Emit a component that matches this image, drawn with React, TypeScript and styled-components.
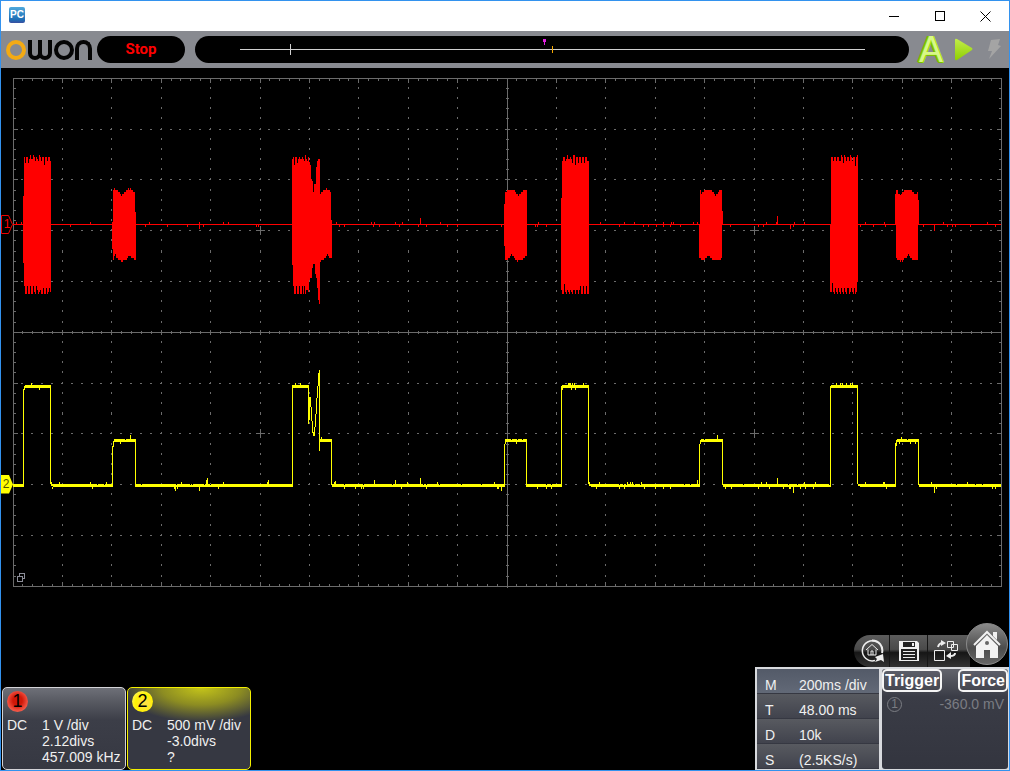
import React from 'react';
import styled, { createGlobalStyle } from 'styled-components';

const GlobalStyle = createGlobalStyle`
  * { box-sizing: border-box; }
  body { margin: 0; background: #000; font-family: "Liberation Sans", Arial, sans-serif; }
  button { font-family: inherit; padding: 0; border: 0; background: none; color: inherit; }
  svg { display: block; }
`;

const Window = styled.div`
  display: flex;
  flex-direction: column;
  min-height: 100vh;
  border: 1px solid #3392ee;
  background: #000;
`;

const TitleBar = styled.header`
  display: flex;
  align-items: center;
  justify-content: space-between;
  height: 30px;
  padding-left: 8px;
  background: #fff;
`;

const AppBadge = styled.span`
  display: flex;
  align-items: center;
  justify-content: center;
  width: 16px;
  height: 16px;
  margin-bottom: 2px;
  border-radius: 2px;
  background: linear-gradient(#4fa9dc, #1d6db5 80%, #3a4fa0);
  color: #fff;
  font-size: 10px;
  font-weight: 700;
  line-height: 16px;
`;

const WindowButtons = styled.div`
  display: flex;
`;

const WindowButton = styled.button`
  display: flex;
  align-items: center;
  justify-content: center;
  width: 46px;
  height: 29px;
`;

const Toolbar = styled.div`
  display: flex;
  align-items: center;
  height: 37px;
  padding: 0 6px 0 5px;
  background: #888a90;
`;

const Logo = styled.div`
  display: flex;
  align-items: center;
  width: 88px;
`;

const Ring = styled.span<{ $tone: string }>`
  width: 20px;
  height: 20px;
  border: 4px solid ${p => p.$tone};
  border-radius: 50%;
`;

const Cup = styled.span`
  width: 14px;
  height: 20px;
  border: 4px solid #050505;
  border-top: 0;
  border-radius: 0 0 8px 8px;
  & + & { margin-left: -4px; }
`;

const CupPair = styled.span`
  display: flex;
  margin: 0 2px;
`;

const Arch = styled.span`
  width: 17px;
  height: 20px;
  margin-left: 1px;
  border: 4px solid #050505;
  border-bottom: 0;
  border-radius: 9px 9px 0 0;
`;

const RunState = styled.div`
  width: 88px;
  height: 27px;
  margin: 0 10px 0 3px;
  border-radius: 14px;
  background: #000;
  color: #f00;
  font: 700 15px/27px Roboto, sans-serif;
  text-align: center;
`;

const MemoryBar = styled.div`
  flex: 1;
  height: 27px;
  border-radius: 14px;
  background: #000;
  overflow: hidden;
`;

const ToolIcons = styled.div`
  display: flex;
  align-items: center;
  gap: 11px;
  margin-left: 9px;
`;

const AutoButton = styled.button`
  width: 26px;
  height: 30px;
  color: #d8f888;
  font-size: 36px;
  font-weight: 400;
  line-height: 28px;
  text-align: center;
  text-shadow: 1px 0 #a4e010, -1px 0 #8fd400, -2px 0 #79bd00, -1px 1px #79bd00, 1px 1px #8fd400;
`;

const IconButton = styled.button`
  display: block;
`;

const Scope = styled.main`
  svg { width: 100%; height: auto; }
`;

const Footer = styled.footer`
  display: flex;
  justify-content: space-between;
  align-items: flex-end;
  margin-top: auto;
`;

const Channels = styled.div`
  display: flex;
  gap: 1px;
  padding-left: 1px;
`;

const ChannelCard = styled.section<{ $edge: string; $fill: string }>`
  width: 124px;
  height: 83px;
  padding: 3px 0 0 4px;
  border: 1px solid ${p => p.$edge};
  border-radius: 5px;
  background: ${p => p.$fill};
  color: #f0f0f0;
  font-size: 14px;
  line-height: 16px;
`;

const ChannelBadge = styled.div<{ $fill: string }>`
  width: 21px;
  height: 21px;
  border-radius: 50%;
  background: ${p => p.$fill};
  color: #000;
  font-size: 18px;
  line-height: 21px;
  text-align: center;
`;

const ChannelBody = styled.div`
  display: flex;
  margin-top: 5px;
`;

const Coupling = styled.div`
  width: 35px;
  flex: none;
`;

const Readings = styled.div`
  white-space: nowrap;
`;

const RightDock = styled.div`
  display: flex;
  flex-direction: column;
  align-items: flex-end;
`;

const QuickBar = styled.nav`
  display: flex;
  align-items: flex-end;
  padding-right: 1px;
`;

const QuickButton = styled.button<{ $width: number; $first?: boolean; $tucked?: boolean }>`
  display: flex;
  align-items: center;
  justify-content: center;
  width: ${p => p.$width}px;
  height: 32px;
  padding-right: ${p => (p.$tucked ? 6 : 0)}px;
  border-left: ${p => (p.$first ? 0 : '1px solid #161616')};
  border-radius: ${p => (p.$first ? '16px 0 0 16px' : 0)};
  background: linear-gradient(#5c5c5c, #4a4a4a 45%, #161616 55%, #333 100%);
`;

const HomeButton = styled.button`
  display: flex;
  align-items: center;
  justify-content: center;
  width: 42px;
  height: 42px;
  margin: 0 0 2px -4px;
  border: 1px solid #8a8a8a;
  border-radius: 50%;
  background: linear-gradient(#8a8a8a, #4c4c4c 60%, #666);
`;

const Panels = styled.div`
  display: flex;
  gap: 3px;
  padding: 2px 1px 1px 2px;
  background: #d8dade;
`;

const TimeTable = styled.table`
  width: 122px;
  border-spacing: 0;
  background: #4a4c55;
  color: #f0f0f0;
  font-size: 14px;
`;

const TimeRow = styled.tr<{ $active?: boolean }>`
  height: 25px;
  background: ${p => (p.$active
    ? 'linear-gradient(#535a68, #626977 24px, #363842 24px)'
    : 'linear-gradient(#585a60, #41434d 24px, #363842 24px)')};
  th, td { padding: 6px 0 0; font-weight: 400; line-height: 16px; text-align: left; white-space: nowrap; }
  th { width: 42px; padding-left: 8px; }
`;

const TriggerPanel = styled.section`
  width: 126px;
  height: 100px;
  border-radius: 3px;
  background: linear-gradient(#62646c, #3a3c46 28%, #33353f);
`;

const TriggerButtons = styled.div`
  display: flex;
  justify-content: space-between;
`;

const TriggerButton = styled.button`
  height: 23px;
  padding: 0 1px;
  border: 2px solid #f4f4f4;
  border-radius: 5px;
  background: linear-gradient(#5c5e68, #454750);
  color: #fff;
  font-size: 16px;
  font-weight: 700;
  line-height: 18px;
`;

const TriggerInfo = styled.div`
  display: flex;
  align-items: center;
  justify-content: space-between;
  padding: 4px 4px 0 5px;
  color: #7b7d83;
  font-size: 14px;
  line-height: 16px;
`;

const SourceMark = styled.span`
  width: 15px;
  height: 15px;
  border: 1px solid #7b7d83;
  border-radius: 50%;
  font-size: 12px;
  line-height: 13px;
  text-align: center;
`;

/* ---- Graticule ---- */

const LEFT = 13;
const TOP = 78;
const RIGHT = 1001;
const BOTTOM = 586;
const MID_X = 507;
const MID_Y = 332;
const gx = (i: number) => Math.floor(LEFT + (i * (RIGHT - LEFT)) / 100);
const gy = (i: number) => Math.round(TOP - 0.2 + (i * (BOTTOM - TOP)) / 50);

const box = (x: number, y: number, w: number, h: number) => `M${x} ${y}h${w}v${h}h${-w}z`;

function graticulePath() {
  const d: string[] = [
    box(LEFT, TOP, RIGHT - LEFT + 1, 1),
    box(LEFT, BOTTOM, RIGHT - LEFT + 1, 1),
    box(LEFT, TOP, 1, BOTTOM - TOP),
    box(RIGHT, TOP, 1, BOTTOM - TOP),
    box(LEFT, MID_Y, RIGHT - LEFT, 1),
    box(MID_X, TOP, 1, BOTTOM - TOP + 2),
  ];
  for (let i = 1; i < 100; i++) {
    const x = gx(i);
    const major = i % 5 === 0;
    d.push(box(x, TOP, 1, major ? 5 : 3));
    d.push(box(x, BOTTOM - (major ? 4 : 2), 1, major ? 4 : 2));
    d.push(box(x, MID_Y - (major ? 2 : 1), 1, major ? 5 : 3));
    for (let j = 5; j < 50; j += 5) if (j !== 25) d.push(box(x - 1, gy(j), 2, 1));
  }
  for (let j = 1; j < 50; j++) {
    const y = gy(j);
    const major = j % 5 === 0;
    d.push(box(LEFT, y, major ? 5 : 3, 1));
    d.push(box(RIGHT - (major ? 4 : 2), y, major ? 4 : 2, 1));
    d.push(box(MID_X - (major ? 2 : 1), y, major ? 5 : 3, 1));
    for (let i = 5; i < 100; i += 5) if (i !== 50) d.push(box(gx(i), y - 1, 1, j === 17 || j === 33 ? 3 : 2));
  }
  for (const x of [260, 754]) for (const y of [230, 433]) d.push(box(x - 4, y, 9, 1), box(x, y - 4, 1, 9));
  return d.join('');
}

/* ---- Channel 1: each burst is an upper and a lower stepped edge ---- */

type Step = [number, number];
interface Burst { end: number; top: Step[]; bottom: Step[] }

const bursts: Burst[] = [
  {
    end: 51,
    top: [[23, 196], [24, 157], [25, 163], [26, 157], [28, 163], [29, 159], [30, 155], [31, 159], [33, 155], [34, 157], [35, 161], [36, 157], [37, 159], [38, 161], [39, 155], [40, 157], [41, 161], [42, 157], [44, 165], [45, 157], [47, 161], [48, 157], [50, 161]],
    bottom: [[23, 263], [24, 286], [25, 294], [27, 286], [28, 294], [30, 286], [31, 294], [33, 286], [34, 292], [35, 294], [36, 286], [37, 290], [38, 294], [39, 292], [40, 290], [41, 294], [43, 288], [44, 294], [46, 288], [47, 294], [48, 292], [49, 288], [50, 292]],
  },
  {
    end: 136,
    top: [[112, 222], [113, 190], [114, 188], [115, 190], [118, 192], [120, 194], [121, 196], [122, 194], [124, 192], [126, 190], [128, 188], [129, 190], [130, 188], [131, 190], [133, 192], [135, 212]],
    bottom: [[112, 249], [113, 260], [114, 256], [115, 254], [116, 258], [118, 260], [121, 262], [123, 260], [127, 258], [128, 256], [131, 258], [134, 260]],
  },
  {
    end: 332,
    top: [[292, 159], [293, 157], [294, 165], [295, 157], [297, 163], [298, 159], [299, 157], [300, 159], [302, 157], [303, 159], [304, 161], [305, 155], [306, 159], [307, 161], [308, 157], [309, 162], [310, 165], [311, 179], [312, 181], [313, 192], [314, 184], [316, 167], [317, 161], [318, 159], [320, 194], [321, 192], [323, 190], [326, 188], [327, 190], [330, 192], [331, 220]],
    bottom: [[292, 265], [293, 286], [294, 294], [296, 286], [297, 294], [299, 286], [300, 294], [302, 286], [303, 294], [304, 286], [305, 294], [306, 290], [308, 292], [309, 280], [310, 278], [312, 268], [313, 264], [315, 274], [316, 278], [317, 288], [318, 300], [319, 304], [320, 262], [321, 260], [324, 258], [326, 256], [327, 254], [328, 256], [329, 258]],
  },
  {
    end: 527,
    top: [[504, 204], [505, 192], [507, 190], [515, 192], [516, 194], [518, 196], [519, 194], [521, 192], [523, 190]],
    bottom: [[504, 246], [505, 260], [508, 258], [510, 256], [511, 254], [512, 256], [514, 258], [515, 260], [517, 262], [518, 260], [523, 258], [525, 256]],
  },
  {
    end: 589,
    top: [[561, 198], [562, 161], [563, 157], [565, 161], [566, 159], [567, 155], [568, 159], [570, 157], [571, 159], [572, 163], [573, 155], [575, 165], [576, 157], [578, 163], [579, 157], [581, 163], [582, 157], [584, 163], [585, 157], [587, 161]],
    bottom: [[561, 290], [562, 294], [564, 284], [565, 292], [566, 294], [567, 290], [568, 292], [569, 294], [570, 290], [571, 292], [572, 294], [573, 290], [575, 294], [576, 290], [578, 294], [579, 290], [580, 286], [581, 294], [583, 286], [584, 294], [586, 286], [587, 294]],
  },
  {
    end: 723,
    top: [[699, 224], [700, 190], [701, 194], [702, 192], [704, 190], [712, 192], [714, 194], [715, 196], [716, 194], [718, 192], [719, 190], [722, 211]],
    bottom: [[699, 258], [701, 260], [705, 258], [707, 256], [710, 258], [712, 260], [721, 258], [722, 225]],
  },
  {
    end: 858,
    top: [[830, 224], [831, 157], [833, 161], [834, 157], [836, 161], [837, 157], [839, 161], [841, 155], [842, 157], [843, 163], [844, 155], [845, 157], [846, 161], [847, 157], [849, 161], [850, 155], [851, 157], [852, 161], [853, 157], [855, 166], [856, 157], [857, 155]],
    bottom: [[830, 292], [832, 283], [833, 292], [834, 294], [835, 288], [836, 292], [837, 294], [838, 288], [839, 292], [840, 294], [841, 288], [842, 292], [843, 294], [844, 288], [845, 292], [846, 294], [847, 288], [849, 294], [850, 292], [851, 288], [852, 292], [853, 294], [854, 288], [855, 294], [856, 292], [857, 282]],
  },
  {
    end: 919,
    top: [[895, 194], [896, 190], [898, 194], [900, 195], [901, 194], [902, 192], [904, 190], [912, 192], [914, 194], [917, 192], [918, 200]],
    bottom: [[895, 225], [896, 258], [897, 260], [900, 262], [901, 260], [902, 262], [903, 260], [904, 258], [907, 256], [908, 254], [909, 256], [910, 258], [912, 260], [918, 225]],
  },
];

function edgePoints(steps: Step[], end: number) {
  const pts: string[] = [];
  steps.forEach(([x, y], i) => {
    const next = i + 1 < steps.length ? steps[i + 1][0] : end;
    pts.push(`${x},${y}`, `${next},${y}`);
  });
  return pts;
}

const burstPoints = (b: Burst) =>
  [...edgePoints(b.top, b.end), ...edgePoints(b.bottom, b.end).reverse()].join(' ');

/* x, then signed height of the spike (negative goes up) */
const redNoise: Step[] = [
  [16, -2], [21, -2], [70, 2], [90, -2], [145, 2], [149, -2], [167, 2], [187, 2], [199, 4], [199, -2], [203, 2], [223, -2], [228, -2], [256, 2], [258, 2],
  [336, -2], [339, 2], [344, 2], [371, -2], [373, 2], [374, -2], [379, 2], [395, -2], [399, 2], [402, -2], [418, 2], [420, -6], [426, 2], [440, -2], [447, 2], [457, 2], [501, 2],
  [535, 2], [537, 2], [538, -2], [546, 2], [600, -2], [619, 2], [624, -2], [634, -2], [643, 2], [648, 2], [656, 2], [663, -2], [663, 2], [670, 2], [671, -2], [673, -2], [680, 2], [693, -2], [697, -2],
  [730, 2], [758, 2], [763, 2], [766, -2], [777, -8], [776, -2], [790, 4], [793, 2], [794, -2], [804, -2], [860, 2], [865, -2], [873, 2], [884, -2], [885, 2],
  [923, 2], [934, 6], [943, -2], [947, 2], [952, 2], [955, 2], [970, 2], [987, -2], [995, 2],
];

const spikes = (list: Step[], y: number, thick: number) =>
  list.map(([x, h]) => (h < 0 ? box(x, y + h, 1, -h) : box(x, y + thick, 1, h))).join('');

/* ---- Channel 2 ---- */

const yellowNoise: Step[] = [
  [52, 2], [59, -2], [90, -2], [92, 2], [106, -2], [174, 2], [175, 4], [177, 2], [181, -2], [199, 4], [206, -4], [207, -6], [218, 2], [223, -2], [267, -2], [268, -4],
  [334, -2], [335, -3], [344, 2], [355, 2], [361, 2], [363, 2], [374, -4], [395, -4], [401, 2], [407, -2], [420, -6], [426, 2], [437, -2], [494, -2], [497, 2], [498, 2], [501, 4],
  [537, 2], [546, 2], [551, 2], [596, 2], [599, -2], [619, 2], [624, 2], [627, -2], [630, -2], [632, -2], [641, -2], [644, 2], [655, 2], [663, 2], [670, 2], [697, -4],
  [725, 2], [731, 2], [758, 2], [761, -2], [766, -2], [769, 2], [777, -6], [783, 2], [789, 2], [790, 2], [793, 6], [800, 2], [804, -2], [805, 2], [813, 2], [815, -2],
  [865, -2], [883, -2], [884, -2], [886, 2], [931, -2], [934, 6], [936, 2], [967, -2], [992, 2], [995, 2],
];

const yellowGaps = [97, 104, 141, 176, 190, 192, 204, 210, 344, 363, 392, 423, 426, 439, 461, 481, 546, 551, 619, 623, 626, 634, 640, 684, 690, 743, 788, 797, 829, 956, 975, 982];

function yellowPath() {
  const d: string[] = [];
  const low: Step[] = [[13, 24], [53, 113], [135, 293], [332, 505], [526, 562], [591, 700], [723, 831], [860, 896], [919, 1001]];
  low.forEach(([a, b]) => d.push(box(a, 484, b - a, 3)));
  const high: Step[] = [[25, 50], [293, 309], [562, 589], [831, 858]];
  high.forEach(([a, b]) => d.push(box(a, 385, b - a, 3)));
  const mid: Step[] = [[114, 136], [320, 332], [506, 527], [701, 723], [897, 919]];
  mid.forEach(([a, b]) => d.push(box(a, 439, b - a, 3)));
  // x, top and bottom of every vertical run
  const runs: [number, number, number][] = [
    [23, 389, 487], [24, 386, 390], [50, 385, 484], [51, 482, 486], [52, 484, 486],
    [112, 446, 487], [113, 441, 447], [135, 440, 487],
    [292, 385, 487], [308, 385, 424], [309, 397, 420], [310, 397, 407], [311, 407, 421], [312, 421, 433], [313, 432, 436], [314, 427, 436], [315, 414, 427], [316, 398, 414], [317, 386, 398], [318, 373, 386], [319, 370, 451], [331, 440, 485],
    [504, 444, 487], [505, 439, 444], [526, 439, 487],
    [561, 386, 487], [588, 385, 484], [589, 482, 486], [590, 484, 486],
    [699, 444, 487], [700, 440, 444], [722, 439, 485],
    [830, 386, 487], [857, 385, 484], [858, 484, 486], [859, 484, 486],
    [895, 443, 487], [896, 440, 446], [918, 439, 485],
    [31, 383, 385], [39, 388, 390], [120, 442, 444], [130, 435, 439], [295, 383, 385], [300, 383, 385], [321, 437, 439],
    [516, 442, 444], [562, 388, 390], [568, 383, 385], [569, 383, 385], [570, 383, 385], [572, 383, 385], [574, 383, 385], [583, 383, 385], [571, 388, 390], [575, 388, 390],
    [717, 435, 439], [836, 383, 385], [840, 383, 385], [842, 383, 385], [846, 383, 385], [850, 383, 385], [852, 383, 385], [901, 437, 439], [899, 442, 444], [910, 442, 444], [915, 442, 444],
  ];
  runs.forEach(([x, a, b]) => d.push(box(x, a, 1, b - a)));
  d.push(spikes(yellowNoise, 484, 3));
  return d.join('');
}

const Oscillogram = () => (
  <svg viewBox="1 68 1008 530" shapeRendering="crispEdges" role="img" aria-label="Channel 1 and channel 2 waveforms">
    <path d={graticulePath()} fill="#6b6b6b" />
    <g fill="#f00">
      <path d={box(LEFT, 224, RIGHT - LEFT, 1) + spikes(redNoise, 224, 1)} />
      {bursts.map(b => <polygon key={b.end} points={burstPoints(b)} />)}
    </g>
    <path d={yellowPath()} fill="#ff0" />
    <path d={yellowGaps.map(x => box(x, 484, 1, 1)).join('') + [125, 511, 517, 522, 704, 907].map(x => box(x, 439, 1, 1)).join('')} fill="#000" />
    <g shapeRendering="auto" fontFamily="Liberation Sans" fontSize="12" textAnchor="middle">
      <path d="M1.5 215.500h7l4 9l-4 9h-7z" fill="none" stroke="#e00" />
      <text x="7" y="228" fill="#f00">1</text>
      <path d="M1 475h8l4 9.500l-4 9h-8z" fill="#ff0" />
      <text x="6" y="488" fill="#555500">2</text>
    </g>
    <g fill="#000" stroke="#8b8d98">
      <rect x="19.500" y="573.500" width="5" height="5" />
      <rect x="17.500" y="576.500" width="5" height="5" />
    </g>
  </svg>
);

const MemoryMap = () => (
  <svg width="100%" height="27" viewBox="195 36 714 27" preserveAspectRatio="none" shapeRendering="crispEdges">
    <rect x="240" y="49" width="625" height="1" fill="#d0d0d0" />
    <rect x="290" y="44" width="1" height="11" fill="#d0d0d0" />
    <path d="M543 39h3v3h-1v3h-1v-3h-1z" fill="#e020e0" />
    <rect x="552" y="46" width="1" height="7" fill="#f5a800" />
  </svg>
);

const timeRows = [
  ['M', '200ms /div'],
  ['T', '48.00 ms'],
  ['D', '10k'],
  ['S', '(2.5KS/s)'],
];

export default function App() {
  return (
    <>
      <GlobalStyle />
      <Window>
        <TitleBar>
          <AppBadge>PC</AppBadge>
          <WindowButtons>
            <WindowButton aria-label="Minimize">
              <svg width="10" height="11" shapeRendering="crispEdges"><path d="M0 5.500h10" stroke="#000" /></svg>
            </WindowButton>
            <WindowButton aria-label="Maximize">
              <svg width="11" height="11" shapeRendering="crispEdges"><path d="M.5.500h9v9h-9z" fill="none" stroke="#000" /></svg>
            </WindowButton>
            <WindowButton aria-label="Close">
              <svg width="12" height="11"><path d="M.5.500l10 10M10.500.500l-10 10" stroke="#000" /></svg>
            </WindowButton>
          </WindowButtons>
        </TitleBar>

        <Toolbar>
          <Logo role="img" aria-label="owon">
            <Ring $tone="#f3aa14" />
            <CupPair><Cup /><Cup /></CupPair>
            <Ring $tone="#050505" />
            <Arch />
          </Logo>
          <RunState>Stop</RunState>
          <MemoryBar><MemoryMap /></MemoryBar>
          <ToolIcons>
            <AutoButton aria-label="Autoset">A</AutoButton>
            <IconButton aria-label="Run">
              <svg width="19" height="23" viewBox="0 0 19 23">
                <defs>
                  <linearGradient id="run" x1="0" y1="0" x2="0" y2="1">
                    <stop offset="0" stopColor="#c2ec4c" />
                    <stop offset="1" stopColor="#8fd000" />
                  </linearGradient>
                </defs>
                <path d="M0 2q0-2 2-1l15 9q1 1 0 2L2 22q-2 1-2-1z" fill="url(#run)" />
              </svg>
            </IconButton>
            <IconButton aria-label="Single">
              <svg width="18" height="21" viewBox="0 0 18 21">
                <path d="M6 1l9-1-2 6 3 1L4 20l3-8H3z" fill="#a4a4a4" />
              </svg>
            </IconButton>
          </ToolIcons>
        </Toolbar>

        <Scope><Oscillogram /></Scope>

        <Footer>
          <Channels>
            <ChannelCard $edge="#d4d4d8" $fill="linear-gradient(#6e7078, #5a5c64 12px, #3c3e48 32px, #363842)">
              <ChannelBadge $fill="radial-gradient(circle at 50% 45%, #d01808 30%, #ee4a3a 60%, #f08070)">1</ChannelBadge>
              <ChannelBody>
                <Coupling>DC</Coupling>
                <Readings>
                  <div>1 V /div</div>
                  <div>2.12divs</div>
                  <div>457.009 kHz</div>
                </Readings>
              </ChannelBody>
            </ChannelCard>
            <ChannelCard $edge="#f4f000" $fill="radial-gradient(ellipse 80px 34px at 60% 0, #c4c41a, #8c8c22 50%, #363842)">
              <ChannelBadge $fill="radial-gradient(circle at 60% 60%, #ffe040 15%, #fff200 50%, #fff68a)">2</ChannelBadge>
              <ChannelBody>
                <Coupling>DC</Coupling>
                <Readings>
                  <div>500 mV /div</div>
                  <div>-3.0divs</div>
                  <div>?</div>
                </Readings>
              </ChannelBody>
            </ChannelCard>
          </Channels>

          <RightDock>
            <QuickBar>
              <QuickButton $width={35} $first aria-label="Default view">
                <svg width="24" height="24" viewBox="0 0 24 24" fill="none" stroke="#eee">
                  <path d="M17 3A10 10 0 1 0 15 21.500" strokeWidth="1.500" />
                  <path d="M12 1.500A10 10 0 0 1 22 14" strokeWidth="2" />
                  <path d="M15 18l8-3 1 8-3-2-6 2 2-3z" fill="#eee" stroke="none" />
                  <path d="M6 11l6-5.500 6 5.500M8 10.500V16h8v-5.500M11 16v-4h2v4" />
                </svg>
              </QuickButton>
              <QuickButton $width={38} aria-label="Save">
                <svg width="20" height="20" viewBox="0 0 20 20">
                  <path d="M0 0h18l2 2v18H0z" fill="#f0f0f0" />
                  <path d="M4 1h12v5H4z" fill="#222" />
                  <path d="M13 2h2v3h-2z" fill="#f0f0f0" />
                  <path d="M2 8h16v11H2z" fill="#222" />
                  <path d="M4 10.500h12M4 13.500h12M4 16.500h12" stroke="#eee" />
                </svg>
              </QuickButton>
              <QuickButton $width={43} $tucked aria-label="Switch window">
                <svg width="24" height="22" viewBox="0 0 24 22" fill="none" stroke="#eee">
                  <path d="M.5 10.500h10v10H.5z" />
                  <path d="M13.500 1.500h6v6h-6zM17.500 4.500h6v6h-6z" />
                  <path d="M4 7q1-4 5-4" strokeWidth="2" />
                  <path d="M7 0l5 3-5 3zM17 12l-5 4 5 3z" fill="#eee" stroke="none" />
                  <path d="M21 13q0 3-5 3" strokeWidth="2" />
                </svg>
              </QuickButton>
              <HomeButton aria-label="Home">
                <svg width="28" height="29" viewBox="0 0 28 29">
                  <path d="M1 15L14 2l13 13" fill="none" stroke="#f2f2f2" strokeWidth="2" />
                  <path d="M20 2h4v8l-4-4z" fill="#f2f2f2" />
                  <path d="M3 16L14 5l11 11v12h-8v-8h-6v8H3z" fill="#f2f2f2" />
                  <circle cx="14" cy="13" r="2" fill="#666" />
                </svg>
              </HomeButton>
            </QuickBar>
            <Panels>
              <TimeTable>
                <tbody>
                  {timeRows.map(([key, value], i) => (
                    <TimeRow key={key} $active={i === 0}>
                      <th scope="row">{key}</th>
                      <td>{value}</td>
                    </TimeRow>
                  ))}
                </tbody>
              </TimeTable>
              <TriggerPanel>
                <TriggerButtons>
                  <TriggerButton>Trigger</TriggerButton>
                  <TriggerButton>Force</TriggerButton>
                </TriggerButtons>
                <TriggerInfo>
                  <SourceMark>1</SourceMark>
                  <span>-360.0 mV</span>
                </TriggerInfo>
              </TriggerPanel>
            </Panels>
          </RightDock>
        </Footer>
      </Window>
    </>
  );
}
